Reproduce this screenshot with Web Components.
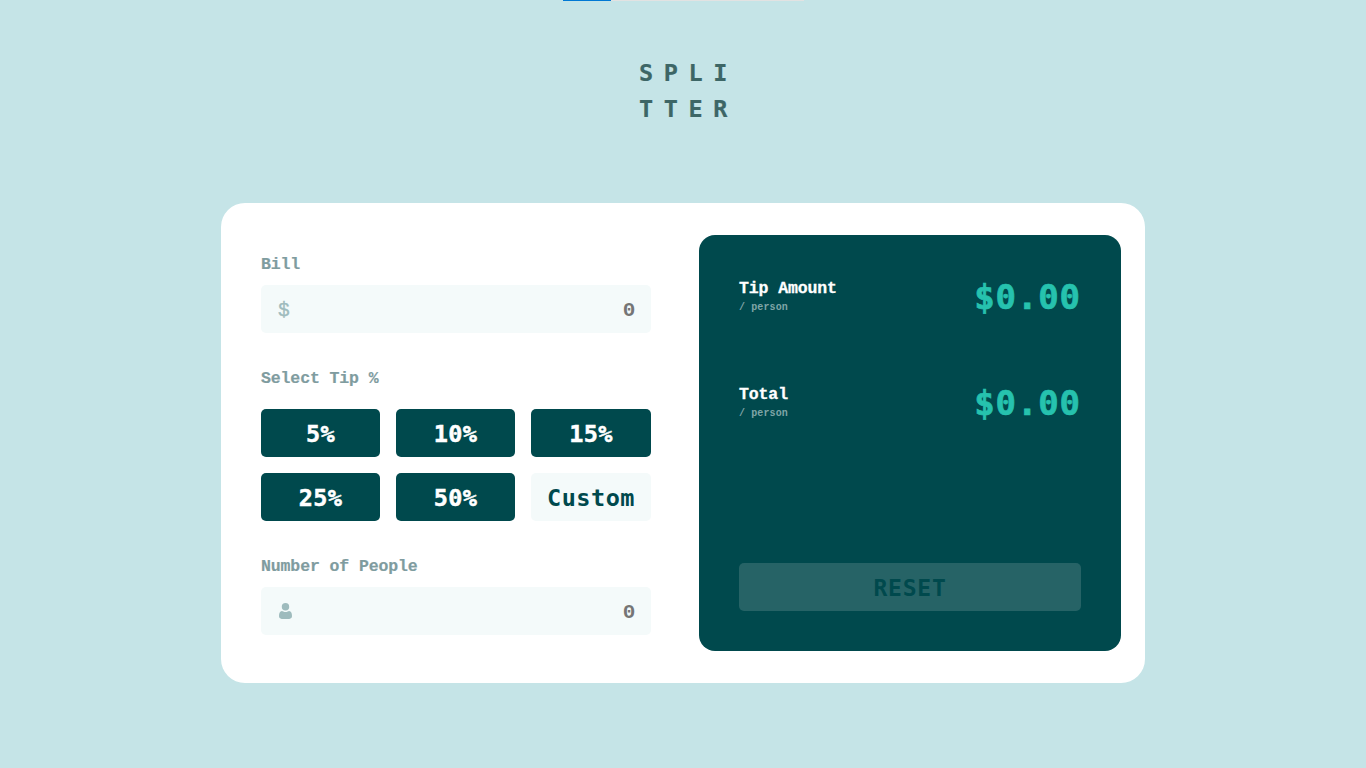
<!DOCTYPE html>
<html lang="en">
<head>
<meta charset="utf-8">
<title>Splitter</title>
<style>
html,body{margin:0;height:100%;overflow:hidden}
body{background:#c5e4e7;font-family:"Liberation Mono",monospace;font-weight:700;--wide:"DejaVu Sans Mono",monospace}
</style>
</head>
<body>
<splitter-app></splitter-app>
<script>
function define(name, html){
  customElements.define(name, class extends HTMLElement{
    connectedCallback(){
      if(this.shadowRoot) return;
      const t=document.createElement('template');
      t.innerHTML=html;
      this.attachShadow({mode:'open'}).append(t.content.cloneNode(true));
    }
  });
}

define('load-bar', `<style>
:host{display:block;width:241px;height:1px;margin:0 auto;background:#e2e2e2}
div{width:48px;height:1px;background:#0078d4}
</style><div></div>`);

define('split-logo', `<style>
:host{display:block;width:88px;margin:0 auto;color:#3d6666;font-family:var(--wide);font-size:23.5px;line-height:36px;letter-spacing:10.6px;white-space:nowrap;-webkit-text-stroke:.2px currentColor}
div{height:36px}
</style><div>SPLI</div><div>TTER</div>`);

define('field-label', `<style>
:host{display:block;height:24px;line-height:26px;font-size:16.5px;letter-spacing:-.11px;color:#7f9c9f;-webkit-text-stroke:.2px currentColor}
</style><slot></slot>`);

define('number-field', `<style>
:host{display:flex;align-items:center;justify-content:space-between;box-sizing:border-box;height:48px;padding:4px 16px 0 17px;border-radius:5px;background:#f4fafa;color:#757575;font-size:21px;line-height:24px;letter-spacing:-.3px}
::slotted([slot=icon]){display:block;color:#9ebbbd}
</style><slot name="icon"></slot><span><slot></slot></span>`);

define('dollar-icon', `<style>
:host{display:block;font-size:19.5px;font-weight:400;line-height:20px;-webkit-text-stroke:.4px currentColor}
</style>$`);

define('person-icon', `<style>:host{display:block}svg{display:block;margin:-4px 0 0 1px}</style>
<svg width="13" height="16" viewBox="0 0 13 16" fill="currentColor"><ellipse cx="6.5" cy="3.75" rx="3.7" ry="3.75"/><path d="M2.9 7.9C.9 8.2 0 10 0 13.1c0 1.7 1 2.8 2.7 2.8h7.6c1.7 0 2.7-1.1 2.7-2.8 0-3.1-.9-4.9-2.9-5.2-.5 0-.9.3-1.4.6-1.4.8-3 .8-4.4 0-.5-.3-.9-.6-1.4-.6Z"/></svg>`);

define('tip-button', `<style>
:host{display:flex;align-items:center;justify-content:center;box-sizing:border-box;height:48px;padding-top:2px;border-radius:5px;background:#00494d;color:#fff;font-family:var(--wide);font-size:23.5px;line-height:36px;letter-spacing:.4px;-webkit-text-stroke:.5px currentColor}
:host([custom]){background:#f4fafa;color:#00494d;letter-spacing:.5px;-webkit-text-stroke:0}
</style><slot></slot>`);

define('tip-grid', `<style>
:host{display:grid;grid-template-columns:119px 119px 120px;gap:16px}
</style><slot></slot>`);

define('bill-form', `<style>
:host{display:block;padding-top:17px}
field-label{margin-bottom:9px}
number-field+field-label{margin-top:33px;margin-bottom:19px}
tip-grid+field-label{margin-top:33px}
</style>
<field-label>Bill</field-label>
<number-field><dollar-icon slot="icon"></dollar-icon>0</number-field>
<field-label>Select Tip %</field-label>
<tip-grid><tip-button>5%</tip-button><tip-button>10%</tip-button><tip-button>15%</tip-button><tip-button>25%</tip-button><tip-button>50%</tip-button><tip-button custom>Custom</tip-button></tip-grid>
<field-label>Number of People</field-label>
<number-field><person-icon slot="icon"></person-icon>0</number-field>`);

define('result-row', `<style>
:host{display:flex;justify-content:space-between;height:52px}
.name{height:24px;line-height:26px;font-size:16.5px;letter-spacing:-.11px;color:#fff;-webkit-text-stroke:.3px currentColor}
.unit{height:15px;line-height:15px;font-size:10px;letter-spacing:.12px;color:#7fa5a7}
.amount{line-height:52px;font-family:var(--wide);font-size:34px;letter-spacing:.9px;color:#26c2ae;-webkit-text-stroke:.7px currentColor}
.left{padding-top:5px}
</style>
<div class="left"><div class="name"><slot></slot></div><div class="unit">/ person</div></div>
<div class="amount"><slot name="amount"></slot></div>`);

define('reset-button', `<style>
:host{display:flex;align-items:center;justify-content:center;box-sizing:border-box;height:48px;padding-top:2px;border-radius:5px;background:#266366;color:#00494d;font-family:var(--wide);font-size:23px;letter-spacing:.8px}
</style><slot></slot>`);

define('result-panel', `<style>
:host{display:flex;flex-direction:column;box-sizing:border-box;padding:36px 40px 40px;border-radius:16px;background:#00494d}
result-row+result-row{margin-top:54px}
reset-button{margin-top:auto}
</style>
<result-row>Tip Amount<span slot="amount">$0.00</span></result-row>
<result-row>Total<span slot="amount">$0.00</span></result-row>
<reset-button>RESET</reset-button>`);

define('splitter-app', `<style>
:host{display:block}
split-logo{padding-top:54px}
main{display:grid;grid-template-columns:390px 422px;gap:48px;box-sizing:border-box;width:924px;height:480px;margin:76px auto 0;padding:32px 24px 32px 40px;border-radius:24px;background:#fff}
</style>
<load-bar></load-bar>
<split-logo></split-logo>
<main><bill-form></bill-form><result-panel></result-panel></main>`);
</script>
</body>
</html>
